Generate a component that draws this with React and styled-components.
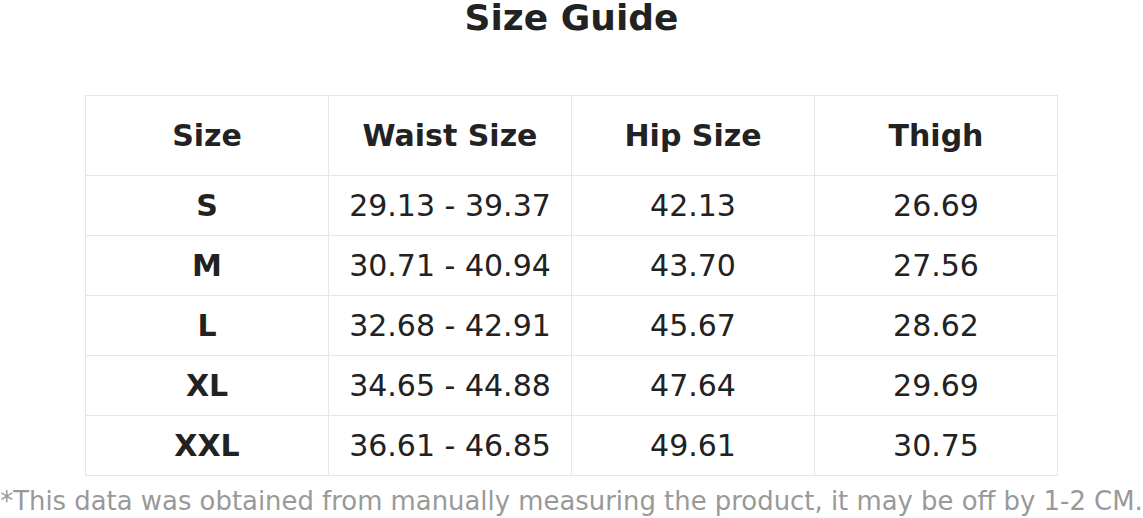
import React from 'react';
import styled, { createGlobalStyle } from 'styled-components';

const Global = createGlobalStyle`
    body {
        margin: 0;
        background: #fff;
        font-family: "DejaVu Sans", Verdana, sans-serif;
        color: #222;
    }
`;

const Page = styled.div`
    display: flex;
    flex-direction: column;
    align-items: center;
    width: 100%;
    overflow: hidden;
`;

const Title = styled.h1`
    margin: 0;
    font-size: 36px;
    font-weight: bold;
    line-height: 36px;
    color: #222;
`;

const Table = styled.table`
    width: 973px;
    margin-top: 59px;
    border-collapse: collapse;
    table-layout: fixed;
`;

const Cell = styled.td`
    border: 1px solid #e6e6e6;
    height: ${({ head }) => (head ? '79px' : '59px')};
    padding: 0;
    text-align: center;
    font-size: 30px;
    font-weight: ${({ bold }) => (bold ? 'bold' : 'normal')};
    color: #222;
`;

const Note = styled.p`
    margin: 10px 0 0;
    white-space: nowrap;
    font-size: 25.9px;
    line-height: 30px;
    color: #999;
`;

const rows = [
    ['S', '29.13 - 39.37', '42.13', '26.69'],
    ['M', '30.71 - 40.94', '43.70', '27.56'],
    ['L', '32.68 - 42.91', '45.67', '28.62'],
    ['XL', '34.65 - 44.88', '47.64', '29.69'],
    ['XXL', '36.61 - 46.85', '49.61', '30.75'],
];

export default function App() {
    return (
        <Page>
            <Global />
            <Title>Size Guide</Title>
            <Table>
                <tbody>
                    <tr>
                        {['Size', 'Waist Size', 'Hip Size', 'Thigh'].map((h) => (
                            <Cell key={h} head bold>{h}</Cell>
                        ))}
                    </tr>
                    {rows.map((r) => (
                        <tr key={r[0]}>
                            {r.map((v, i) => (
                                <Cell key={i} bold={i === 0}>{v}</Cell>
                            ))}
                        </tr>
                    ))}
                </tbody>
            </Table>
            <Note>*This data was obtained from manually measuring the product, it may be off by 1-2 CM.</Note>
        </Page>
    );
}
